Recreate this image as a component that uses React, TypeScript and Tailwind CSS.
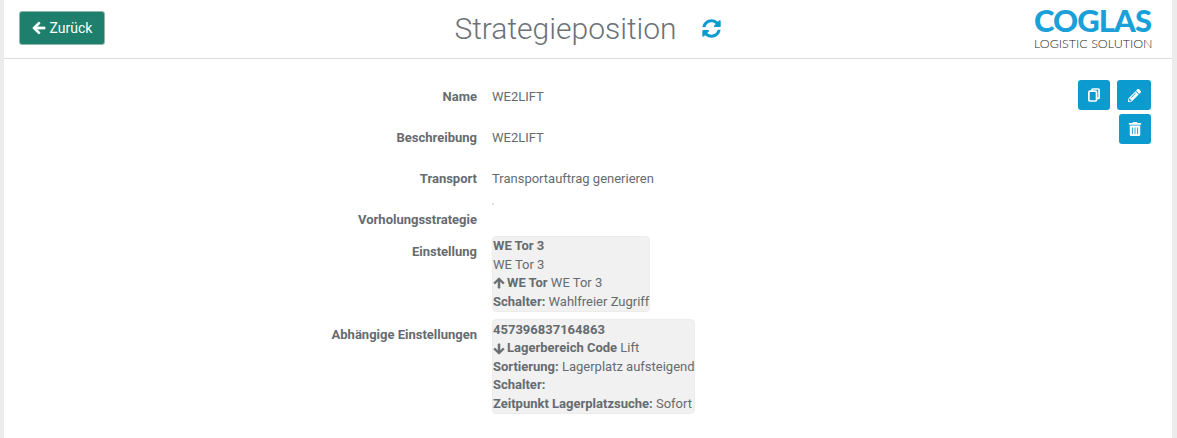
import { FaArrowLeft, FaArrowUp, FaArrowDown, FaSyncAlt, FaPencilAlt, FaTrashAlt } from 'react-icons/fa';

const Label = ({ children, className = '' }: { children: string; className?: string }) => (
    <div className={`w-[473px] shrink-0 text-right text-[13px] font-bold leading-[19px] text-[#666b70] ${className}`}>{children}</div>
);

const Row = ({ label, value, className = '' }: { label: string; value?: string; className?: string }) => (
    <div className={`flex gap-[15px] ${className}`}>
        <Label>{label}</Label>
        <div className="text-[13px] leading-[19px] text-[#666b70]">{value}</div>
    </div>
);

const IconButton = ({ children, className = '' }: { children: React.ReactNode; className?: string }) => (
    <button className={`flex h-[30px] items-center justify-center rounded-[3px] bg-[#0c9bcf] text-white ${className}`}>{children}</button>
);

const CopyIcon = () => (
    <svg viewBox="0 0 14 16" className="h-[14px] w-[12px]" fill="none" stroke="currentColor" strokeWidth="2">
        <path d="M4.5 3V2.2c0-.7.5-1.2 1.2-1.2h6.1c.7 0 1.2.5 1.2 1.2v8.6c0 .7-.5 1.2-1.2 1.2h-1.3" />
        <rect x="1" y="3.4" width="9" height="11.6" rx="1.4" />
    </svg>
);

export default function App() {
    return (
        <div className="h-[438px] w-[1177px] overflow-hidden bg-[#ececec] font-['Roboto',sans-serif]">
            <div className="ml-[4px] h-full w-[1168px] bg-white">
                <header className="flex h-[59px] items-start justify-between border-b border-[#dcdcdc]">
                    <button className="ml-[15px] mt-[11px] flex h-[34px] w-[86px] items-center justify-center gap-[4px] rounded-[3px] border border-[#8fb9ad] bg-[#1e806c] text-[14px] text-white">
                        <FaArrowLeft className="h-[14px] w-[14px] stroke-current stroke-[24]" />
                        Zurück
                    </button>
                    <div className="ml-[36px] mt-[10px] flex items-center">
                        <h1 className="text-[30px] font-light leading-[38px] text-[#6b7278]">Strategieposition</h1>
                        <FaSyncAlt className="ml-[25px] -mt-[2px] h-[19px] w-[19px] text-[#0c9bcf]" />
                    </div>
                    <div className="mr-[20px] mt-[5px] w-[118px] font-['Lato',sans-serif]">
                        <div className="whitespace-nowrap text-[31px] font-black leading-[30px] tracking-[-0.9px] text-[#1aa0d8]">COGLAS</div>
                        <div className="mt-[2px] whitespace-nowrap text-[12.5px] font-light leading-[14px] text-[#262626]">LOGISTIC SOLUTION</div>
                    </div>
                </header>
                <div className="relative pt-[28px]">
                    <Row label="Name" value="WE2LIFT" />
                    <Row label="Beschreibung" value="WE2LIFT" className="mt-[22px]" />
                    <Row label="Transport" value="Transportauftrag generieren" className="mt-[22px]" />
                    <div className="mt-[22px] flex gap-[15px]">
                        <Label>Vorholungsstrategie</Label>
                        <div className="-mt-[7px] h-[2px] w-[2px] bg-[#e2e2e2]" />
                    </div>
                    <div className="mt-[7px] flex gap-[15px]">
                        <Label className="pt-[6px]">Einstellung</Label>
                        <div className="w-fit rounded-[4px] border border-[#ececec] bg-[#f1f1f1] text-[13px] leading-[18.6px] text-[#666b70]">
                            <div className="font-bold">WE Tor 3</div>
                            <div>WE Tor 3</div>
                            <div className="flex items-center whitespace-pre"><FaArrowUp className="mr-[2px] h-[12px] w-[12px] stroke-current stroke-[24]" /><b>WE Tor</b> WE Tor 3</div>
                            <div><b>Schalter:</b> Wahlfreier Zugriff</div>
                        </div>
                    </div>
                    <div className="mt-[7px] flex gap-[15px]">
                        <Label className="pt-[6px]">Abhängige Einstellungen</Label>
                        <div className="w-[203px] whitespace-nowrap rounded-[4px] border border-[#ececec] bg-[#f1f1f1] pt-[0.5px] text-[13px] leading-[18.5px] text-[#666b70]">
                            <div className="font-bold">457396837164863</div>
                            <div className="flex items-center whitespace-pre"><FaArrowDown className="mr-[2px] h-[12px] w-[12px] stroke-current stroke-[24]" /><b>Lagerbereich Code</b> Lift</div>
                            <div><b>Sortierung:</b> Lagerplatz aufsteigend</div>
                            <div><b>Schalter:</b></div>
                            <div><b>Zeitpunkt Lagerplatzsuche:</b> Sofort</div>
                        </div>
                    </div>
                    <div className="absolute right-[21px] top-[21px] flex w-[74px] flex-wrap justify-end gap-x-[7px] gap-y-[4px]">
                        <IconButton className="w-[32px]"><CopyIcon /></IconButton>
                        <IconButton className="w-[34px]"><FaPencilAlt className="h-[13px] w-[13px]" /></IconButton>
                        <IconButton className="w-[32px]"><FaTrashAlt className="h-[14px] w-[14px]" /></IconButton>
                    </div>
                </div>
            </div>
        </div>
    );
}
